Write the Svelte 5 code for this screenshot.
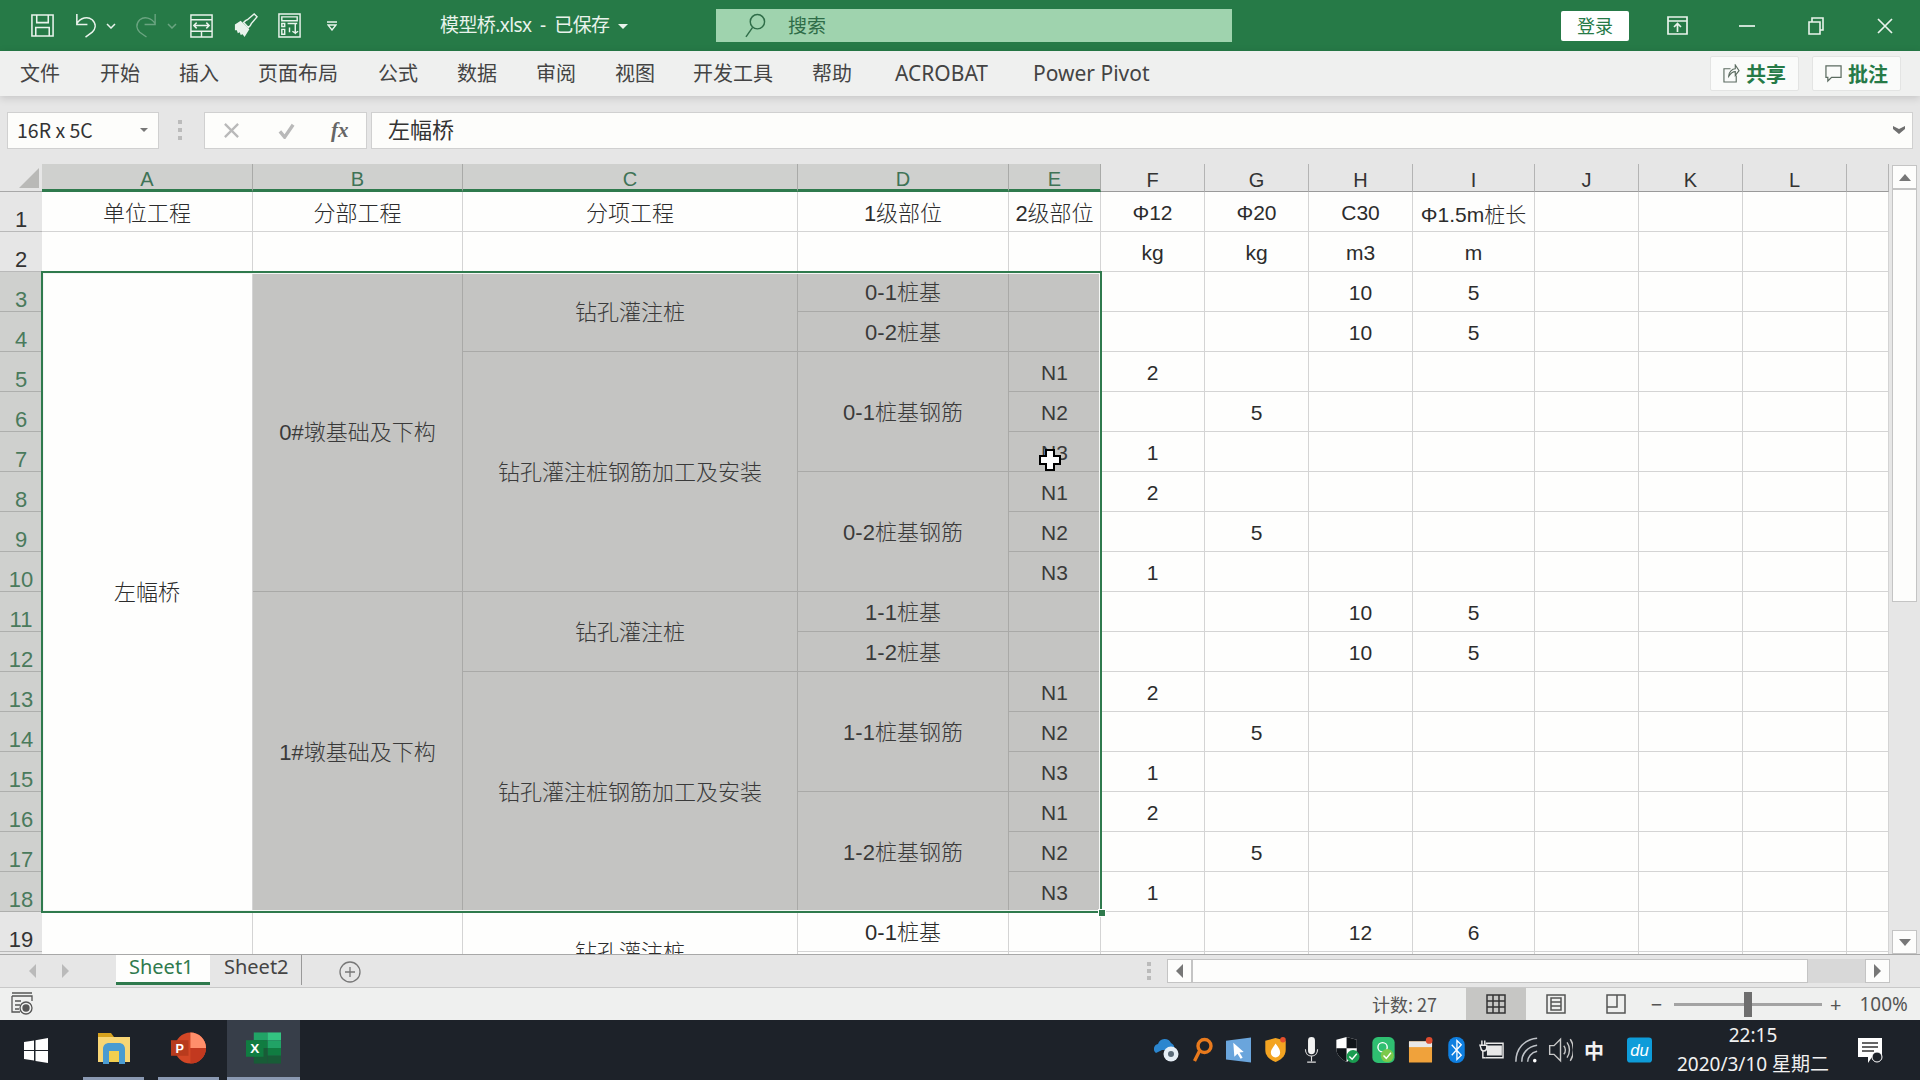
<script>
	const colWidths = [42, 211, 210, 335, 211, 92, 104, 104, 104, 122, 104, 104, 104, 42];
	const letters = ['A', 'B', 'C', 'D', 'E', 'F', 'G', 'H', 'I', 'J', 'K', 'L'];
	const gridCols = colWidths.map((w) => w + 'px').join(' ');
	const gridRows = '28px ' + Array(19).fill('40px').join(' ') + ' 40px';

	const menu = [
		['文件', 0],
		['开始', 40],
		['插入', 39],
		['页面布局', 39],
		['公式', 40],
		['数据', 39],
		['审阅', 39],
		['视图', 39],
		['开发工具', 38],
		['帮助', 39],
		['ACROBAT', 43, true],
		['Power Pivot', 45, true]
	];

	// merged cells, [col, row, colspan, rowspan, text]
	const merged = [
		[1, 3, 1, 16, '左幅桥', 'plain'],
		[2, 3, 1, 8, '0#墩基础及下构'],
		[2, 11, 1, 8, '1#墩基础及下构'],
		[3, 3, 1, 2, '钻孔灌注桩'],
		[3, 5, 1, 6, '钻孔灌注桩钢筋加工及安装'],
		[3, 11, 1, 2, '钻孔灌注桩'],
		[3, 13, 1, 6, '钻孔灌注桩钢筋加工及安装'],
		[4, 3, 1, 1, '0-1桩基'],
		[4, 4, 1, 1, '0-2桩基'],
		[4, 5, 1, 3, '0-1桩基钢筋'],
		[4, 8, 1, 3, '0-2桩基钢筋'],
		[4, 11, 1, 1, '1-1桩基'],
		[4, 12, 1, 1, '1-2桩基'],
		[4, 13, 1, 3, '1-1桩基钢筋'],
		[4, 16, 1, 3, '1-2桩基钢筋']
	];

	const levels = { 5: 'N1', 6: 'N2', 7: 'N3', 8: 'N1', 9: 'N2', 10: 'N3', 13: 'N1', 14: 'N2', 15: 'N3', 16: 'N1', 17: 'N2', 18: 'N3' };
	const amounts = {
		3: ['', '', '10', '5'],
		4: ['', '', '10', '5'],
		5: ['2'],
		6: ['', '5'],
		7: ['1'],
		8: ['2'],
		9: ['', '5'],
		10: ['1'],
		11: ['', '', '10', '5'],
		12: ['', '', '10', '5'],
		13: ['2'],
		14: ['', '5'],
		15: ['1'],
		16: ['2'],
		17: ['', '5'],
		18: ['1'],
		19: ['', '', '12', '6'],
		20: []
	};

	const cells = [];
	const header = ['单位工程', '分部工程', '分项工程', '1级部位', '2级部位', 'Φ12', 'Φ20', 'C30', 'Φ1.5m桩长'];
	const units = ['', '', '', '', '', 'kg', 'kg', 'm3', 'm'];
	for (let c = 1; c <= 13; c++) {
		cells.push({ c, r: 1, cs: 1, rs: 1, text: header[c - 1] ?? '', kind: 'plain head' });
		cells.push({ c, r: 2, cs: 1, rs: 1, text: units[c - 1] ?? '', kind: 'plain head' });
	}
	for (const [c, r, cs, rs, text, kind] of merged) cells.push({ c, r, cs, rs, text, kind: kind ?? 'sel' });
	for (let r = 3; r <= 18; r++) cells.push({ c: 5, r, cs: 1, rs: 1, text: levels[r] ?? '', kind: 'sel' });
	for (let r = 3; r <= 20; r++) {
		for (let c = 6; c <= 13; c++) {
			cells.push({ c, r, cs: 1, rs: 1, text: amounts[r]?.[c - 6] ?? '', kind: 'plain' });
		}
	}
	// rows 19 and 20 of the left columns
	cells.push({ c: 1, r: 19, cs: 1, rs: 2, text: '', kind: 'plain' });
	cells.push({ c: 2, r: 19, cs: 1, rs: 2, text: '', kind: 'plain' });
	cells.push({ c: 3, r: 19, cs: 1, rs: 2, text: '钻孔灌注桩', kind: 'plain' });
	cells.push({ c: 4, r: 19, cs: 1, rs: 1, text: '0-1桩基', kind: 'plain' });
	cells.push({ c: 5, r: 19, cs: 1, rs: 1, text: '', kind: 'plain' });
	cells.push({ c: 4, r: 20, cs: 1, rs: 1, text: '', kind: 'plain' });
	cells.push({ c: 5, r: 20, cs: 1, rs: 1, text: '', kind: 'plain' });

	const rows = Array.from({ length: 19 }, (_, i) => i + 1);
	const isCjk = (text) => /[\u4e00-\u9fff]/.test(text) && !text.includes('Φ');
</script>

<div class="window">
	<header class="titlebar">
		<div class="quick">
			<svg class="q save" viewBox="0 0 26 26" fill="none" stroke="currentColor" stroke-width="1.6"><path d="M2 2h22v22H2zM7 2v8h12V2M6 24v-9h14v9" /></svg>
			<svg class="q undo" viewBox="0 0 26 26" fill="none" stroke="currentColor" stroke-width="1.6"><path d="M4 1v11h11M4 11c4-6 11-8 16-4 5 5 3 10 0 13l-7 5" /></svg>
			<svg class="chev" viewBox="0 0 10 6" fill="none" stroke="currentColor" stroke-width="1.5"><path d="M1 1l4 4 4-4" /></svg>
			<svg class="q redo" viewBox="0 0 26 26" fill="none" stroke="currentColor" stroke-width="1.4"><path d="M22 1v11H11M22 11c-4-6-11-8-16-4-5 5-3 10 0 13l7 5" /></svg>
			<svg class="chev dim" viewBox="0 0 10 6" fill="none" stroke="currentColor" stroke-width="1.5"><path d="M1 1l4 4 4-4" /></svg>
			<svg class="q fit" viewBox="0 0 26 26" fill="none" stroke="currentColor" stroke-width="1.5"><path d="M2 2h22v23H2zM2 7h22M2 19h22M2 25V19M13 19v6M5 13h16M8 10l-3 3 3 3M18 10l3 3-3 3" /></svg>
			<svg class="q brush" viewBox="0 0 26 26"><path d="M2 12l6-4 9 9-5 8-2-3-2 1-1-3-2 1-1-3-2 0z" fill="currentColor" /><path d="M11 10l2-2 2-1 7-6 3 3-6 7-1 2-2 2z" fill="none" stroke="currentColor" stroke-width="1.5" /></svg>
			<svg class="q layout" viewBox="0 0 26 26" fill="none" stroke="currentColor" stroke-width="1.5"><path d="M2 1h22v24H2zM5 4h16v4H5zM5 11h3v3H5zM5 17h3v5H5zM11 11h10M19 11v10l-3-2M19 21l3-2M13 20v-5" /></svg>
			<svg class="more" viewBox="0 0 10 10"><path d="M0 1h10" stroke="currentColor" stroke-width="1.5" /><path d="M1 4h8L5 9z" fill="none" stroke="currentColor" stroke-width="1.4" /></svg>
		</div>
		<div class="doc">模型桥.xlsx&nbsp;&nbsp;-&nbsp;&nbsp;已保存<i class="caret"></i></div>
		<div class="search">
			<svg viewBox="0 0 22 26" fill="none" stroke="#2f6d48" stroke-width="1.5"><circle cx="13" cy="9" r="7.5" /><path d="M8 15L1 25" /></svg>
			<span>搜索</span>
		</div>
		<button class="login">登录</button>
		<svg class="win display" viewBox="0 0 21 19" fill="none" stroke="currentColor" stroke-width="1.7"><path d="M1 1h19v17H1zM1 5h19M10.500 16V8M7 11l3.500-3.500L14 11" /></svg>
		<svg class="win min" viewBox="0 0 16 2"><path d="M0 1h16" stroke="currentColor" stroke-width="1.7" /></svg>
		<svg class="win restore" viewBox="0 0 16 18" fill="none" stroke="currentColor" stroke-width="1.6"><path d="M1 5h11v12H1zM4 5V1h11v12h-3" /></svg>
		<svg class="win close" viewBox="0 0 16 16" stroke="currentColor" stroke-width="1.7"><path d="M1 1l14 14M15 1L1 15" /></svg>
	</header>

	<nav class="menubar">
		{#each menu as [label, gap, latin]}
			<span class:latin style="margin-left: {gap}px">{label}</span>
		{/each}
		<div class="actions">
			<button class="act">
				<svg viewBox="0 0 18 20" fill="none" stroke="#5b6b60" stroke-width="1.2"><path d="M8 5H1v14h13v-7M6 13c0-5 4-8 7-8V1l4 6-4 5V8c-3 0-5 2-7 5z" /></svg>
				共享
			</button>
			<button class="act">
				<svg viewBox="0 0 18 18" fill="none" stroke="#5b6b60" stroke-width="1.3"><path d="M1 1h16v12H7l-4 4v-4H1z" /></svg>
				批注
			</button>
		</div>
	</nav>

	<section class="formula">
		<div class="namebox"><span>16R x 5C</span><i class="caret small"></i></div>
		<div class="grip"><b></b><b></b><b></b></div>
		<div class="fxbox">
			<svg viewBox="0 0 18 18" stroke="#b9b9b9" stroke-width="2.4"><path d="M2 2l14 14M16 2L2 16" /></svg>
			<svg viewBox="0 0 18 18" fill="none" stroke="#b9b9b9" stroke-width="3.600"><path d="M2 10l5 6L16 3" /></svg>
			<em>fx</em>
		</div>
		<div class="input">
			<span>左幅桥</span>
			<svg viewBox="0 0 12 8" fill="#6f6f6f"><path d="M0 0l6 3 6-3v3L6 8 0 3z" /></svg>
		</div>
	</section>

	<section class="sheet">
		<div class="grid" style="grid-template-columns: {gridCols}; grid-template-rows: {gridRows}">
			<div class="corner"><svg viewBox="0 0 20 20"><path d="M20 0v20H0z" fill="#b9b9b7" /></svg></div>
			{#each letters as letter, i}
				<div class="colhead" class:on={i < 5} style="grid-column: {i + 2}; grid-row: 1">{letter}</div>
			{/each}
			<div class="colhead" style="grid-column: 14; grid-row: 1"></div>
			{#each rows as r}
				<div class="rowhead" class:on={r >= 3 && r <= 18} style="grid-column: 1; grid-row: {r + 1}">{r}</div>
			{/each}
			<div class="rowhead" style="grid-column: 1; grid-row: 21"></div>
			{#each cells as cell}
				<div
					class="cell {cell.kind}"
					class:cjk={isCjk(cell.text)}
					style="grid-column: {cell.c + 1} / span {cell.cs}; grid-row: {cell.r + 1} / span {cell.rs}"
				>
					{cell.text}
				</div>
			{/each}
			<div class="selection">
				<i class="handle"></i>
				<svg class="pointer" viewBox="0 0 22 22"><path d="M7 1h8v6h6v8h-6v6H7v-6H1V7h6z" fill="#fff" stroke="#000" stroke-width="2" /></svg>
			</div>
		</div>
		<aside class="vscroll">
			<button class="sbtn"><i class="tri up"></i></button>
			<div class="thumb"></div>
			<div class="track"></div>
			<button class="sbtn"><i class="tri down"></i></button>
		</aside>
	</section>

	<section class="tabbar">
		<i class="tri left nav"></i>
		<i class="tri right nav second"></i>
		<div class="tab active">Sheet1</div>
		<div class="tab">Sheet2</div>
		<svg class="add" viewBox="0 0 22 22" fill="none" stroke="#777" stroke-width="1.300"><circle cx="11" cy="11" r="10" /><path d="M11 6v10M6 11h10" /></svg>
		<div class="grip tabs"><b></b><b></b><b></b></div>
		<div class="hscroll">
			<button class="sbtn h"><i class="tri left"></i></button>
			<div class="hthumb"></div>
			<div class="htrack"></div>
			<button class="sbtn h"><i class="tri right"></i></button>
		</div>
	</section>

	<footer class="status">
		<svg class="macro" viewBox="0 0 22 24" fill="none" stroke="#555" stroke-width="1.300"><path d="M1 1h20M1 4h20v5M1 4v16h8M4 9h6M4 13h5M4 17h4" /><circle cx="15" cy="16" r="6" /><circle cx="15" cy="16" r="3" fill="#555" /></svg>
		<span class="count">计数: 27</span>
		<div class="view on">
			<svg viewBox="0 0 20 20" fill="none" stroke="#333" stroke-width="1.500"><path d="M1 1h18v18H1zM7 1v18M13 1v18M1 7h18M1 13h18" /></svg>
		</div>
		<div class="view">
			<svg viewBox="0 0 20 20" fill="none" stroke="#555" stroke-width="1.500"><path d="M1 1h18v18H1zM5 4h10v12H5zM5 8h10M5 12h10" /></svg>
		</div>
		<div class="view">
			<svg viewBox="0 0 20 20" fill="none" stroke="#555" stroke-width="1.500"><path d="M1 1h18v18H1zM1 13h10V1" /></svg>
		</div>
		<span class="zoomsign first">−</span>
		<div class="slider"><i></i></div>
		<span class="zoomsign">+</span>
		<span class="pct">100%</span>
	</footer>

	<footer class="taskbar">
		<svg class="start" viewBox="0 0 24 25" fill="#fff"><path d="M0 4l10-1.500V12H0zM11.500 2.200L24 0v12H11.500zM0 13h10v9.500L0 21zM11.500 13H24v12l-12.500-2z" /></svg>
		<div class="task open folder">
			<svg viewBox="0 0 32 32"><path d="M0 1h13l3 4H0z" fill="#d6a21e" /><path d="M0 5h32v25H0z" fill="#f8d675" /><path d="M5 32V17c0-4 3-6 6-6h10c3 0 6 2 6 6v15h-6V19H11v13z" fill="#4a9bd1" /><path d="M11 19h10v11H11z" fill="#f2cf4f" /></svg>
		</div>
		<div class="task open ppt">
			<svg viewBox="0 0 36 32"><circle cx="20" cy="16" r="16" fill="#d24726" /><path d="M20 0a16 16 0 0 1 16 16H20z" fill="#ff8f6b" /><path d="M20 16h16a16 16 0 0 1-16 16z" fill="#c2391f" /><path d="M0 8h18v16H0z" fill="#b83b1d" /><text x="9" y="21" text-anchor="middle" font-size="13" font-weight="700" fill="#fff" font-family="Liberation Sans">P</text></svg>
		</div>
		<div class="task open active xl">
			<svg viewBox="0 0 36 32"><path d="M8 0h14v8H8z" fill="#21a366" /><path d="M22 0h14v8H22z" fill="#33c481" /><path d="M22 8h14v8H22z" fill="#21a366" /><path d="M8 8h14v8H8zM22 16h14v8H22z" fill="#107c41" /><path d="M8 16h14v16H8z" fill="#185c37" /><path d="M22 24h14v8H22z" fill="#185c37" /><path d="M0 8h18v17H0z" fill="#107c41" /><text x="9" y="21" text-anchor="middle" font-size="14" font-weight="700" fill="#fff" font-family="Liberation Sans">X</text></svg>
		</div>
		<div class="tray">
			<span><svg viewBox="0 0 25 24"><path d="M2 15a5 5 0 0 1 2-9 7 7 0 0 1 13-1 6 6 0 0 1 3 7H8z" fill="#2b86cf" /><circle cx="17" cy="16" r="7.500" fill="#e6eef5" /><circle cx="17" cy="16" r="3" fill="#5b6b78" /></svg></span>
			<span><svg viewBox="0 0 20 26" fill="none" stroke="#e87a1d" stroke-width="3.400"><circle cx="12" cy="9" r="6.500" /><path d="M7 14L2 24" /></svg></span>
			<span><svg viewBox="0 0 24 24"><path d="M0 3l24-3v24L0 21z" fill="#6aa5dc" /><path d="M7 5l10 9-4 .500 3 5-2 1-3-5-3 3z" fill="#fff" /></svg></span>
			<span><svg viewBox="0 0 24 28"><path d="M1 4l11-3 11 3v10c0 7-6 11-11 13C7 25 1 21 1 14z" fill="#f3a422" /><path d="M12 7c3 4 5 6 5 10a5 5 0 0 1-10 0c0-4 3-6 5-10z" fill="#fff" /><circle cx="20" cy="3" r="3" fill="#e5502c" /></svg></span>
			<span><svg viewBox="0 0 16 30" fill="none"><rect x="4" y="0" width="8" height="20" rx="4" fill="#f2f2f2" /><path d="M1 14c0 5 3 8 7 8s7-3 7-8M8 22v6M3 29h10" stroke="#ddd" stroke-width="1.300" /></svg></span>
			<span><svg viewBox="0 0 26 28"><path d="M1 3l11-3 11 3v10c0 7-6 11-11 14C7 24 1 20 1 13z" fill="#fff" /><path d="M12 0l11 3v9H12zM1 12h11v15C7 24 1 20 1 13z" fill="#11151a" /><circle cx="19" cy="21" r="7" fill="#1a9c50" /><path d="M15 21l3 3 5-6" stroke="#fff" fill="none" stroke-width="1.500" /></svg></span>
			<span><svg viewBox="0 0 24 28"><rect width="24" height="28" rx="6" fill="#2fbf71" /><circle cx="11" cy="11" r="5" fill="none" stroke="#fff" stroke-width="1.500" /><circle cx="16" cy="20" r="7" fill="#7cc94a" /><path d="M12 20l3 3 5-6" stroke="#fff" fill="none" stroke-width="1.500" /></svg></span>
			<span><svg viewBox="0 0 26 26"><path d="M1 4h24v22H1z" fill="#f0a23b" /><path d="M1 4h24v6H1z" fill="#e8e8e8" /><circle cx="22" cy="3" r="3.500" fill="#dc4b2f" /></svg></span>
			<span><svg viewBox="0 0 19 30"><rect width="19" height="30" rx="9" fill="#0f7fe0" /><path d="M4 9l11 12-5 5V4l5 5L4 21" fill="none" stroke="#fff" stroke-width="1.500" /></svg></span>
			<span class="battery"><svg viewBox="0 0 26 20" fill="none" stroke="#e8e8e8" stroke-width="1.500"><path d="M7 3h18v15H7" /><path d="M9 6h14v9H9z" fill="#e8e8e8" /><path d="M3 0v5M6 0v5M1 5h7v3a3 3 0 0 1-6 0z" /><path d="M4 11v7h3" /></svg></span>
			<span><svg viewBox="0 0 20 22" fill="none" stroke="#bfc3c8" stroke-width="1.300"><path d="M1 21C1 10 8 2 19 1M6 21c0-7 5-13 13-14M11 21c0-4 3-8 8-9" /><circle cx="17" cy="20" r="1.500" fill="#fff" stroke="none" /></svg></span>
			<span class="volume"><svg viewBox="0 0 22 24" fill="none" stroke="#c8c8c8" stroke-width="1.300"><path d="M1 8h4l6-6v20l-6-6H1zM14 8c2 2 2 6 0 8M17 5c3 4 3 10 0 14M20 2c4 6 4 14 0 20" /></svg></span>
			<span class="ime">中</span>
			<span class="baidu"><svg viewBox="0 0 24 24"><rect width="24" height="24" rx="3" fill="#0e9cd9" /><text x="12" y="18" text-anchor="middle" font-size="16" font-style="italic" fill="#fff" font-family="Liberation Sans">du</text></svg></span>
		</div>
		<div class="clock">
			<span>22:15</span>
			<span>2020/3/10 星期二</span>
		</div>
		<svg class="notify" viewBox="0 0 27 25"><path d="M1 0h24v19H15l-4 6v-6H1z" fill="#fff" /><path d="M5 5h16M5 9h16M5 13h12" stroke="#333" stroke-width="1.300" /><circle cx="20" cy="19" r="5" fill="#1d2229" stroke="#fff" /></svg>
	</footer>
</div>

<style>
	:global(body) {
		background: #e6e6e6;
	}
	.window {
		display: flex;
		flex-direction: column;
		width: 1920px;
		height: 1080px;
		overflow: hidden;
		font-family: 'Noto Sans', 'Noto Sans CJK SC', sans-serif;
		background: #e6e6e6;
	}
	button {
		font-family: inherit;
		padding: 0;
		border: 0;
	}

	.titlebar {
		display: flex;
		align-items: center;
		flex: none;
		height: 51px;
		background: #267a47;
		color: #e9f3ec;
	}
	.quick {
		display: flex;
		align-items: center;
		flex: none;
		width: 440px;
		padding-left: 30px;
		box-sizing: border-box;
	}
	.q {
		width: 25px;
		height: 25px;
		flex: none;
	}
	.undo {
		margin-left: 18px;
	}
	.chev {
		width: 10px;
		height: 6px;
		margin-left: 8px;
	}
	.redo {
		margin-left: 18px;
		opacity: 0.35;
	}
	.dim {
		opacity: 0.35;
	}
	.fit {
		margin-left: 12px;
	}
	.brush,
	.layout {
		margin-left: 19px;
	}
	.more {
		width: 10px;
		height: 10px;
		margin-left: 25px;
	}
	.doc {
		flex: none;
		width: 276px;
		margin-top: -3px;
		font-size: 19px;
		letter-spacing: -0.6px;
	}
	.caret {
		display: inline-block;
		margin-left: 9px;
		vertical-align: 3px;
		border: 5px solid transparent;
		border-top-color: currentColor;
		border-bottom: 0;
	}
	.search {
		display: flex;
		align-items: center;
		flex: none;
		width: 516px;
		height: 33px;
		box-sizing: border-box;
		padding-left: 29px;
		background: #9fd3ae;
		color: #2f6d48;
		font-size: 19px;
	}
	.search svg {
		width: 21px;
		height: 25px;
		margin-right: 22px;
	}
	.search span {
		margin-top: -2px;
	}
	.login {
		width: 68px;
		height: 30px;
		margin-left: 329px;
		padding-bottom: 2px;
		background: #fff;
		border-radius: 2px;
		color: #267a47;
		font-size: 18px;
	}
	.win {
		flex: none;
	}
	.display {
		width: 21px;
		height: 19px;
		margin-left: 38px;
	}
	.min {
		width: 16px;
		height: 2px;
		margin-left: 51px;
	}
	.restore {
		width: 16px;
		height: 18px;
		margin-left: 53px;
	}
	.close {
		width: 16px;
		height: 16px;
		margin-left: 53px;
	}

	.menubar {
		display: flex;
		align-items: center;
		flex: none;
		height: 45px;
		padding: 0 19px 0 20px;
		background: #eff0ef;
		color: #444;
		font-size: 20px;
		box-shadow: 0 2px 8px rgba(0, 0, 0, 0.15);
		position: relative;
	}
	.menubar span {
		margin-top: -2px;
	}
	.menubar .latin {
		font-size: 21px;
	}
	.actions {
		display: flex;
		gap: 13px;
		margin-left: auto;
	}
	.act {
		display: flex;
		align-items: center;
		justify-content: center;
		gap: 6px;
		width: 89px;
		height: 35px;
		background: #fafbfa;
		border: 1px solid #e3e4e3;
		border-radius: 2px;
		color: #267a47;
		font-size: 20px;
		font-weight: 700;
	}
	.act svg {
		width: 17px;
		height: 19px;
	}

	.formula {
		display: flex;
		align-items: center;
		flex: none;
		height: 68px;
		padding: 0 7px;
		box-sizing: border-box;
	}
	.namebox {
		display: flex;
		align-items: center;
		justify-content: space-between;
		box-sizing: border-box;
		width: 152px;
		height: 37px;
		padding: 0 6px 0 9px;
		background: #fdfdfb;
		border: 1px solid #d0d0d0;
		color: #333;
		font-family: 'Noto Sans CJK SC', sans-serif;
		font-size: 19.5px;
	}
	.namebox span {
		margin-top: -2px;
	}
	.caret.small {
		border-width: 4px;
		border-bottom: 0;
		color: #777;
		margin-right: 4px;
		vertical-align: 0;
	}
	.grip {
		display: flex;
		flex-direction: column;
		gap: 4px;
		width: 4px;
		margin: 0 22px 0 19px;
	}
	.grip b {
		height: 4px;
		background: #bbb;
	}
	.fxbox {
		display: flex;
		align-items: center;
		box-sizing: border-box;
		width: 163px;
		height: 37px;
		padding-left: 18px;
		background: #fdfdfb;
		border: 1px solid #d0d0d0;
	}
	.fxbox svg {
		width: 17px;
		height: 17px;
		margin-right: 38px;
	}
	.fxbox em {
		font-family: 'Liberation Serif', serif;
		font-size: 21px;
		font-weight: 700;
		color: #666;
		margin-left: -2px;
	}
	.input {
		display: flex;
		align-items: center;
		justify-content: space-between;
		flex: 1;
		box-sizing: border-box;
		height: 37px;
		margin-left: 4px;
		padding: 0 7px 0 16px;
		background: #fdfdfb;
		border: 1px solid #d0d0d0;
		color: #333;
		font-size: 22px;
	}
	.input span {
		margin-top: -5px;
	}
	.input svg {
		width: 12px;
		height: 8px;
	}

	.sheet {
		display: flex;
		flex: none;
		height: 790px;
		border-bottom: 1px solid #a8a8a8;
		box-sizing: content-box;
	}
	.grid {
		display: grid;
		flex: none;
		width: 1889px;
		height: 790px;
		overflow: hidden;
		background: #fefefd;
		font-family: 'Liberation Sans', 'Noto Sans CJK SC', sans-serif;
		font-size: 21px;
		color: #2c2c2c;
	}
	.corner {
		grid-column: 1;
		grid-row: 1;
		display: flex;
		align-items: flex-end;
		justify-content: flex-end;
		background: #e6e6e6;
		border-bottom: 1px solid #a8a8a8;
		padding: 0 3px 3px 0;
	}
	.corner svg {
		width: 20px;
		height: 20px;
	}
	.colhead {
		display: flex;
		align-items: flex-end;
		justify-content: center;
		box-sizing: border-box;
		background: #e6e6e6;
		border-right: 1px solid #b4b4b4;
		border-bottom: 1px solid #9a9a9a;
		font-size: 20px;
		line-height: 22px;
		font-weight: 300;
		color: #333;
	}
	.colhead.on {
		background: #cfd0ce;
		border-bottom: 3px solid #2f7a4d;
		color: #3f7356;
		border-right-color: #a9aaa8;
		line-height: 20px;
	}
	.rowhead {
		display: flex;
		align-items: flex-end;
		justify-content: center;
		box-sizing: border-box;
		background: #e6e6e6;
		border-bottom: 1px solid #b9b9b9;
		font-size: 22px;
		line-height: 23px;
		font-weight: 300;
		color: #333;
	}
	.rowhead.on {
		background: #cfd0ce;
		color: #4a7a5c;
		border-bottom-color: #aeafad;
	}
	.cell {
		display: flex;
		align-items: center;
		justify-content: center;
		box-sizing: border-box;
		padding-top: 3px;
		border-right: 1px solid #d4d4d4;
		border-bottom: 1px solid #d4d4d4;
		white-space: nowrap;
		font-weight: 300;
	}
	.cell.sel {
		background: #c4c4c2;
		border-color: #a9a9a7;
		color: #3a3a3a;
	}
	.cell.head {
		padding-top: 2px;
	}
	.cell.cjk {
		padding: 0 0 3px;
		font-size: 22px;
	}
	.cell.head.cjk {
		padding-bottom: 2px;
	}
	.selection {
		position: relative;
		grid-column: 2 / 7;
		grid-row: 4 / 20;
		margin: -1px -1px -1px -1px;
		border: 2px solid #2f7a4d;
		box-shadow: inset 0 0 0 1px #f4f6f4;
	}
	.handle {
		position: absolute;
		right: -6px;
		bottom: -6px;
		width: 6px;
		height: 6px;
		background: #2f7a4d;
		border: 1px solid #fff;
	}
	.pointer {
		position: absolute;
		left: 996px;
		top: 176px;
		width: 22px;
		height: 22px;
	}
	.vscroll {
		display: flex;
		flex-direction: column;
		align-items: center;
		flex: 1;
		padding-top: 1px;
		box-sizing: border-box;
	}
	.sbtn {
		display: flex;
		align-items: center;
		justify-content: center;
		flex: none;
		width: 25px;
		height: 24px;
		background: #fdfdfc;
		border: 1px solid #c4c4c4;
		box-sizing: border-box;
	}
	.thumb {
		flex: none;
		box-sizing: border-box;
		width: 25px;
		height: 413px;
		background: #fdfdfc;
		border: 1px solid #c4c4c4;
	}
	.track {
		flex: 1;
	}
	.tri {
		display: block;
		width: 0;
		height: 0;
		border: 5px solid transparent;
	}
	.tri.up {
		border-top: 0;
		border-bottom: 7px solid #777;
		border-left-width: 6px;
		border-right-width: 6px;
	}
	.tri.down {
		border-bottom: 0;
		border-top: 7px solid #777;
		border-left-width: 6px;
		border-right-width: 6px;
	}
	.tri.left {
		border-left: 0;
		border-right: 7px solid #777;
		border-top-width: 7px;
		border-bottom-width: 7px;
	}
	.tri.right {
		border-right: 0;
		border-left: 7px solid #777;
		border-top-width: 7px;
		border-bottom-width: 7px;
	}

	.tabbar {
		display: flex;
		align-items: flex-start;
		flex: none;
		height: 32px;
		border-bottom: 1px solid #c8c8c8;
		box-sizing: content-box;
		background: #e6e6e6;
	}
	.nav {
		margin: 9px 0 0 29px;
		opacity: 0.4;
	}
	.nav.second {
		margin-left: 26px;
	}
	.tab {
		box-sizing: border-box;
		height: 30px;
		padding: 0 14px;
		width: 92px;
		border-right: 1px solid #999;
		font-size: 20px;
		line-height: 23px;
		color: #444;
	}
	.tab.active {
		width: 94px;
		margin-left: 47px;
		padding: 0 13px;
		background: #fefefd;
		border-bottom: 3px solid #2f7a4d;
		border-right: 0;
		color: #2f7a4d;
	}
	.add {
		width: 22px;
		height: 22px;
		margin: 6px 0 0 37px;
	}
	.grip.tabs {
		margin: 7px 0 0 786px;
		gap: 3px;
	}
	.hscroll {
		display: flex;
		width: 723px;
		height: 24px;
		margin: 4px 0 0 16px;
	}
	.hthumb {
		box-sizing: border-box;
		width: 616px;
		background: #fdfdfc;
		border: 1px solid #c4c4c4;
	}
	.htrack {
		flex: 1;
		background: #d8d8d8;
	}

	.status {
		display: flex;
		align-items: center;
		flex: none;
		height: 32px;
		background: #eff0ef;
		color: #555;
	}
	.macro {
		width: 22px;
		height: 24px;
		margin-left: 11px;
	}
	.count {
		width: 94px;
		margin-left: 1339px;
		font-family: 'Noto Sans CJK SC', sans-serif;
		font-size: 18px;
	}
	.view {
		display: flex;
		align-items: center;
		justify-content: center;
		width: 60px;
		height: 32px;
	}
	.view.on {
		background: #c6c6c4;
	}
	.view svg {
		width: 20px;
		height: 20px;
	}
	.zoomsign {
		font-size: 20px;
		margin-left: 8px;
	}
	.zoomsign.first {
		margin-left: 0;
		width: 21px;
		text-align: center;
	}
	.slider {
		position: relative;
		width: 148px;
		height: 3px;
		margin-left: 7px;
		background: #a3a3a3;
	}
	.slider i {
		position: absolute;
		left: 70px;
		top: -11px;
		width: 8px;
		height: 25px;
		background: #6e6e6e;
	}
	.pct {
		margin-left: 18px;
		font-size: 19px;
	}

	.taskbar {
		display: flex;
		align-items: center;
		flex: none;
		height: 60px;
		background: #1d2229;
		color: #f1f1f1;
	}
	.start {
		width: 24px;
		height: 25px;
		margin: 0 35px 0 24px;
	}
	.task {
		display: flex;
		align-items: center;
		justify-content: center;
		box-sizing: border-box;
		width: 61px;
		height: 60px;
		padding-bottom: 1px;
		border-bottom: 3px solid transparent;
		margin-right: 14px;
	}
	.task.open {
		border-bottom-color: #8a99b2;
	}
	.task.active {
		width: 73px;
		margin-left: -6px;
		margin-right: 0;
		background: #373e49;
	}
	.folder svg {
		width: 32px;
		height: 32px;
	}
	.ppt svg,
	.xl svg {
		width: 35px;
		height: 32px;
	}
	.tray {
		display: flex;
		align-items: center;
		margin-left: auto;
	}
	.tray span {
		display: flex;
		align-items: center;
		justify-content: center;
		width: 36.3px;
	}
	.tray svg {
		width: 25px;
		height: 26px;
	}
	.tray .battery {
		width: 34px;
	}
	.tray .volume {
		width: 31px;
	}
	.tray .ime {
		width: 36px;
		font-size: 20px;
		font-weight: 700;
	}
	.tray .baidu {
		width: 30px;
		margin-left: 12px;
	}
	.clock {
		display: flex;
		flex-direction: column;
		align-items: center;
		gap: 4px;
		width: 198px;
		font-size: 19px;
		line-height: 25px;
	}
	.notify {
		width: 27px;
		height: 25px;
		margin: 0 36px 0 5px;
	}
</style>
